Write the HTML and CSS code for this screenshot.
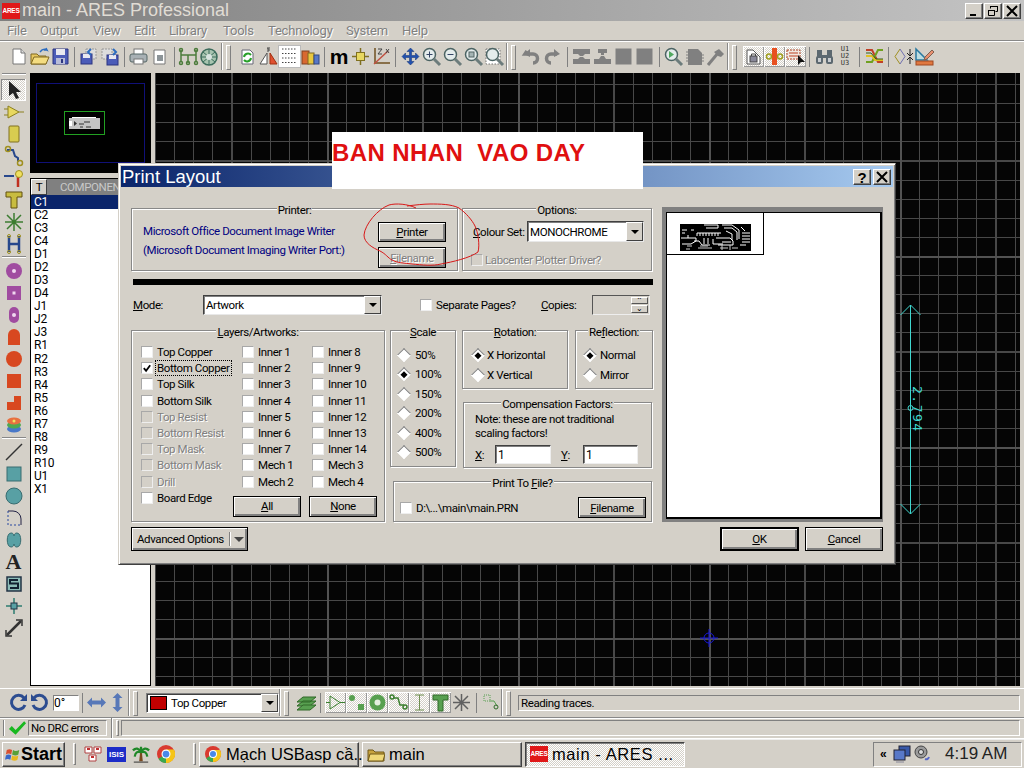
FILE: index.html
```html
<!DOCTYPE html>
<html lang="en">
<head>
<meta charset="utf-8">
<title>main - ARES Professional</title>
<link rel="stylesheet" href="styles.css">
</head>
<body>
<svg class="defs" width="0" height="0" aria-hidden="true">
  <symbol id="chrome" viewBox="0 0 16 16"><circle cx="8" cy="8" r="8" fill="#d93a2f"/><path d="M8 8L1.2 12.2A8 8 0 0 0 8 16z" fill="#3aa84f"/><path d="M8 8v8a8 8 0 0 0 7-12H8z" fill="#f5c518"/><circle cx="8" cy="8" r="4" fill="#fff"/><circle cx="8" cy="8" r="3" fill="#4a88e8"/></symbol>
  <symbol id="floppy" viewBox="0 0 21 21"><path d="M3 3h15v15H3z" fill="#4c5cb8" stroke="#2c3580"/><rect x="6" y="3" width="9" height="6" fill="#e8e8f0"/><rect x="6" y="12" width="9" height="6" fill="#b8bcd8"/><rect x="11" y="13" width="2" height="4" fill="#2c3580"/></symbol>
  <symbol id="mag" viewBox="0 0 21 21"><circle cx="8.500" cy="8.500" r="6" fill="#e4ecec" stroke="#4c6464" stroke-width="1.500"/><path d="M13 13l6 6" stroke="#6c7c7c" stroke-width="3"/></symbol>
  <symbol id="check" viewBox="0 0 11 11"><path d="M2 5l2.500 3L9 2" fill="none" stroke="#000" stroke-width="2"/></symbol>
  <symbol id="padr" viewBox="0 0 22 22"><circle cx="11" cy="11" r="8" fill="#a04ca0"/><circle cx="11" cy="11" r="2" fill="#f0d8f0"/></symbol>
</svg>

<div class="app">
  <header class="titlebar">
    <span class="logo">ARES</span>
    <span class="title-text">main - ARES Professional</span>
    <div class="winbtns">
      <span class="winbtn"><svg width="10" height="10"><path d="M1 8h6v2H1z"/></svg></span>
      <span class="winbtn"><svg width="12" height="12" fill="none" stroke="#000"><path d="M3.500 3.500V1.500h7v5H8.500"/><path d="M3 1.500h8M1.500 5.500h6v5h-6z"/><path d="M1 5.500h7" stroke-width="1"/></svg></span>
      <span class="winbtn"><svg width="12" height="12"><path d="M1 1l10 10M11 1L1 11" stroke="#000" stroke-width="2"/></svg></span>
    </div>
  </header>

  <nav class="menubar">
    <span class="menu m-file">File</span><span class="menu m-output">Output</span><span class="menu m-view">View</span><span class="menu m-edit">Edit</span><span class="menu m-lib">Library</span><span class="menu m-tools">Tools</span><span class="menu m-tech">Technology</span><span class="menu m-sys">System</span><span class="menu m-help">Help</span>
  </nav>

  <div class="toolbar">
    <span class="i"><svg viewBox="0 0 21 21"><path d="M5 3h8l4 4v11H5z" fill="#fff" stroke="#777"/><path d="M13 3v4h4" fill="#ddd" stroke="#777"/></svg></span>
    <span class="i"><svg viewBox="0 0 21 21"><path d="M2 8h6l2 2h7v8H2z" fill="#e8c860" stroke="#806820"/><path d="M2 18l3-7h15l-3 7z" fill="#f4dc80" stroke="#806820"/><path d="M11 6q3-4 7-2l-1-2M18 4l-3 0" fill="none" stroke="#2c6cc0" stroke-width="1.500"/></svg></span>
    <span class="i"><svg viewBox="0 0 21 21"><use href="#floppy"/></svg></span>
    <span class="sep"></span>
    <span class="i"><svg viewBox="0 0 21 21"><path d="M8 3h10v10H8z" fill="#ddd" stroke="#999" stroke-dasharray="2 1"/><rect x="3" y="8" width="11" height="10" fill="#4c5cb8" stroke="#2c3580"/><rect x="5" y="8" width="7" height="4" fill="#e8e8f0"/><path d="M13 3l-3 3 3 3" fill="none" stroke="#2c6cc0" stroke-width="2"/></svg></span>
    <span class="i"><svg viewBox="0 0 21 21"><path d="M3 3h10v10H3z" fill="#ddd" stroke="#999" stroke-dasharray="2 1"/><rect x="8" y="9" width="11" height="10" fill="#4c5cb8" stroke="#2c3580"/><rect x="10" y="9" width="7" height="4" fill="#e8e8f0"/><path d="M14 3l3 3-3 3" fill="none" stroke="#2c6cc0" stroke-width="2"/></svg></span>
    <span class="sep sep8"></span>
    <span class="i"><svg viewBox="0 0 21 21"><rect x="6" y="3" width="9" height="6" fill="#fff" stroke="#777"/><rect x="2" y="8" width="17" height="8" rx="2" fill="#a8b0b4" stroke="#566"/><rect x="6" y="13" width="9" height="5" fill="#fff" stroke="#777"/></svg></span>
    <span class="i"><svg viewBox="0 0 21 21"><path d="M5 4h11v14H5z" fill="#fff" stroke="#777"/><rect x="8" y="9" width="6" height="6" fill="#8c9498"/></svg></span>
    <span class="sep sep8"></span>
    <span class="i"><svg viewBox="0 0 21 21" fill="none" stroke="#4c7c3c" stroke-width="1.500"><path d="M3 4v12M18 4v12M3 9h7v8M10 9h8"/><circle cx="3" cy="4" r="1.500"/><circle cx="18" cy="4" r="1.500"/><circle cx="3" cy="17" r="1.500"/><circle cx="18" cy="17" r="1.500"/><circle cx="10" cy="17" r="1.500"/></svg></span>
    <span class="i"><svg viewBox="0 0 21 21"><circle cx="10" cy="11" r="8" fill="#a8c4b0" stroke="#3c6c5c" stroke-width="1.500"/><path d="M10 3v16M2 11h16M4 6l12 10M16 6L4 16" stroke="#3c6c5c"/><circle cx="10" cy="11" r="3" fill="#d8e4e0"/></svg></span>
    <span class="grip"></span>
    <span class="i"><svg viewBox="0 0 21 21"><path d="M5 4h8l3 3v11H5z" fill="#fff" stroke="#667"/><path d="M7 11a4 4 0 0 1 7-2M14 12a4 4 0 0 1-7 2" fill="none" stroke="#28a028" stroke-width="2"/></svg></span>
    <span class="i"><svg viewBox="0 0 21 21"><path d="M9 7L2 18h7z" fill="#fff" stroke="#555"/><path d="M12 7l7 11h-7z" fill="#e05030" stroke="#a03010"/><path d="M9 2h3M10 2v4M10 4h2" stroke="#444"/></svg></span>
    <span class="i i-on"><svg viewBox="0 0 21 21"><path d="M3 3h15M3 7.500h15M3 12h15M3 16.500h15" stroke="#444" stroke-dasharray="1.500 1.500"/></svg></span>
    <span class="i"><svg viewBox="0 0 21 21"><rect x="2" y="5" width="7" height="13" fill="#d86830" stroke="#804020"/><rect x="8" y="7" width="6" height="11" fill="#e8c840" stroke="#806820"/><rect x="14" y="9" width="5" height="9" fill="#5878c8" stroke="#304880"/></svg></span>
    <span class="sep sep8"></span>
    <span class="i"><span class="icon-m">m</span></span>
    <span class="i"><svg viewBox="0 0 21 21"><path d="M10.500 2v17M2 10.500h17" stroke="#807020" stroke-width="1.500"/><rect x="6.500" y="6.500" width="8" height="8" fill="#e8d860" stroke="#807020"/></svg></span>
    <span class="i"><svg viewBox="0 0 21 21" fill="none"><path d="M4 2v15h15" stroke="#705020" stroke-width="1.500"/><path d="M3 18L17 5" stroke="#c05040" stroke-width="1.500"/><path d="M7 3h4L7 8h4M15 3l3 4M18 3l-3 4" stroke="#444"/></svg></span>
    <span class="sep sep8"></span>
    <span class="i"><svg viewBox="0 0 21 21"><path d="M10.500 2l3.500 3.500h-2.500v4h4V7l3.500 3.500-3.500 3.500v-2.500h-4v4H14L10.500 19 7 15.500h2.500v-4h-4V14L2 10.500 5.500 7v2.500h4v-4H7z" fill="#2050b0" stroke="#103070" stroke-width=".5"/></svg></span>
    <span class="i"><svg viewBox="0 0 21 21"><use href="#mag"/><path d="M5.500 8.500h6M8.500 5.500v6" stroke="#346"/></svg></span>
    <span class="i"><svg viewBox="0 0 21 21"><use href="#mag"/><path d="M5.500 8.500h6" stroke="#346"/></svg></span>
    <span class="i"><svg viewBox="0 0 21 21"><use href="#mag"/><rect x="6" y="6" width="5" height="5" fill="#a4b4b4" stroke="#566"/></svg></span>
    <span class="i"><svg viewBox="0 0 21 21"><path d="M2 3h14v15H2z" fill="#fff" stroke="#777" stroke-dasharray="1.500 1.500"/><use href="#mag"/></svg></span>
    <span class="grip"></span>
    <span class="i"><svg viewBox="0 0 21 21"><path d="M6 5l-2 3 8-0a4 4 0 0 1 0 9" fill="none" stroke="#808080" stroke-width="3.500"/><path d="M3 8l6-5v8z" fill="#808080"/></svg></span>
    <span class="i"><svg viewBox="0 0 21 21"><path d="M15 8l-6 0a4 4 0 0 0 0 9" fill="none" stroke="#808080" stroke-width="3.500"/><path d="M18 8l-6-5v8z" fill="#808080"/></svg></span>
    <span class="sep sep8"></span>
    <span class="i"><svg viewBox="0 0 21 21"><path d="M2 3h17v5h-5l-2 2h-3L7 8H2zM2 18v-5h5l2-2h3l2 2h5v5z" fill="#808080"/></svg></span>
    <span class="i"><svg viewBox="0 0 21 21"><path d="M2 13h5l2-3h3l2 3h5v5H2zM6 3h9v4h-3v2H9V7H6z" fill="#808080"/></svg></span>
    <span class="i"><svg viewBox="0 0 21 21"><rect x="2.500" y="2.500" width="16" height="16" fill="#808080"/></svg></span>
    <span class="i"><svg viewBox="0 0 21 21"><rect x="2.500" y="2.500" width="16" height="16" fill="#808080"/></svg></span>
    <span class="sep sep8"></span>
    <span class="i"><svg viewBox="0 0 21 21"><use href="#mag"/><path d="M6 5l5 3.500L6 12z" fill="#50a860"/></svg></span>
    <span class="i"><svg viewBox="0 0 21 21"><path d="M4 3h10l4 4v12H4z" fill="#808080"/><path d="M2 6h2M2 9h2M2 12h2M2 15h2M18 9h2M18 12h2M18 15h2" stroke="#808080"/></svg></span>
    <span class="i"><svg viewBox="0 0 21 21"><path d="M3 19L13 7" stroke="#808080" stroke-width="3"/><path d="M9 6l5-3 5 5-3 3-3-1-2-2z" fill="#808080"/></svg></span>
    <span class="grip"></span>
    <span class="i i-dither"><svg viewBox="0 0 21 21"><path d="M4 18V4h6l7 7v7z" fill="#fff" stroke="#555"/><rect x="7" y="10" width="7" height="6" fill="#889" stroke="#444"/><path d="M8.500 10V8h4v2" fill="none" stroke="#444"/></svg></span>
    <span class="i i-dither"><svg viewBox="0 0 21 21"><rect x="8" y="2" width="5" height="17" fill="#e85020"/><circle cx="5" cy="10.500" r="2.500" fill="none" stroke="#a0a020" stroke-width="1.500"/><circle cx="16" cy="10.500" r="2.500" fill="none" stroke="#a0a020" stroke-width="1.500"/></svg></span>
    <span class="i i-dither"><svg viewBox="0 0 21 21"><rect x="2" y="4" width="13" height="9" fill="#f0e8e0" stroke="#b04020" stroke-dasharray="2 1"/><path d="M4 7h9M4 10h9" stroke="#c04020"/><path d="M13 9v10l3-3h4z" fill="#111"/></svg></span>
    <span class="sep sep8"></span>
    <span class="i"><svg viewBox="0 0 21 21" fill="#5c6870"><rect x="2" y="10" width="7" height="8" rx="2"/><rect x="12" y="10" width="7" height="8" rx="2"/><rect x="3" y="4" width="5" height="7"/><rect x="13" y="4" width="5" height="7"/><rect x="8" y="9" width="5" height="3"/><path d="M4 12h3v4H4zM14 12h3v4h-3z" fill="#c8ccd0"/></svg></span>
    <span class="i icon-u"><span>U1</span><span>U2</span><span>U3</span></span>
    <span class="sep sep8"></span>
    <span class="i"><svg viewBox="0 0 21 21" fill="none" stroke-width="2"><path d="M2 4h6l6 12h5" stroke="#c04028"/><path d="M2 16h6l6-12h5" stroke="#70a020"/><path d="M2 10h6l3 4h8" stroke="#e0c020"/><path d="M2 7h5l5 6h7" stroke="#306020" stroke-width="1"/></svg></span>
    <span class="sep sep8"></span>
    <span class="i"><svg viewBox="0 0 21 21" fill="none"><path d="M7 3L2 10.500 7 18" stroke="#a09020"/><path d="M7 3l5 7.500L7 18" stroke="#7070b0"/><path d="M17 3v6M14 7l3 3 3-3M17 18v-6M14 14l3-3 3 3" stroke="#222"/></svg></span>
    <span class="i"><svg viewBox="0 0 21 21"><path d="M2 14V3l11 11z" fill="#bcdce0" stroke="#2878a0" stroke-width="1.500"/><rect x="2" y="15" width="17" height="4" fill="#e07840" stroke="#a04820"/><path d="M11 11l7-7 2 2-7 7-3 1z" fill="#e89070" stroke="#806050"/></svg></span>
  </div>

  <main class="workspace">
    <aside class="tools">
      <span class="tools-grip"></span>
      <span class="t t-on"><svg viewBox="0 0 22 22"><path d="M6 2v15l4-3 3 6 3-1-3-6h5z" fill="#222"/></svg></span>
      <span class="t"><svg viewBox="0 0 22 22"><path d="M5 5v12l11-6zM1 8h4M1 14h4M16 11h5" fill="#e8d860" stroke="#8c8020"/></svg></span>
      <span class="t"><svg viewBox="0 0 22 22"><rect x="6" y="3" width="10" height="16" rx="1" fill="#d8cc50" stroke="#807020"/></svg></span>
      <span class="t"><svg viewBox="0 0 22 22" fill="none"><path d="M4 5h6l2 6 3 2v4" stroke="#28488c" stroke-width="2"/><circle cx="5" cy="4" r="2.500" stroke="#a09020" stroke-width="1.500"/><circle cx="17" cy="18" r="2.500" stroke="#a09020" stroke-width="1.500"/></svg></span>
      <span class="t"><svg viewBox="0 0 22 22" fill="none"><path d="M1 9h10" stroke="#28488c" stroke-width="2"/><path d="M15 10v10" stroke="#c03020" stroke-width="2.500"/><circle cx="16" cy="7" r="3.500" fill="#f0e060" stroke="#a09020"/></svg></span>
      <span class="t"><svg viewBox="0 0 22 22"><path d="M3 3h16v5h-5v11H8V8H3z" fill="#c8bc40" stroke="#605010"/></svg></span>
      <span class="t"><svg viewBox="0 0 22 22" stroke="#3c7c30" stroke-width="1.500"><path d="M11 2v18M2 11h18M4 4l14 14M18 4L4 18"/></svg></span>
      <span class="t"><svg viewBox="0 0 22 22" fill="none"><path d="M6 3v16M16 3v16M6 11h10" stroke="#28488c" stroke-width="2.500"/><circle cx="6" cy="3" r="1.500" stroke="#a09020"/><circle cx="16" cy="3" r="1.500" stroke="#a09020"/><circle cx="6" cy="19" r="1.500" stroke="#a09020"/><circle cx="16" cy="19" r="1.500" stroke="#a09020"/></svg></span>
      <span class="tools-sep"></span>
      <span class="t"><svg viewBox="0 0 22 22"><use href="#padr"/></svg></span>
      <span class="t"><svg viewBox="0 0 22 22"><rect x="4" y="4" width="14" height="14" fill="#a04ca0"/><rect x="9.500" y="9.500" width="3" height="3" fill="#f0d8f0"/></svg></span>
      <span class="t"><svg viewBox="0 0 22 22"><rect x="6" y="3" width="10" height="16" rx="5" fill="#a04ca0"/><circle cx="11" cy="11" r="2" fill="#f0d8f0"/></svg></span>
      <span class="t"><svg viewBox="0 0 22 22"><path d="M5 19V9a6 6 0 0 1 12 0v10z" fill="#d84820"/></svg></span>
      <span class="t"><svg viewBox="0 0 22 22"><circle cx="11" cy="11" r="8" fill="#d84820"/></svg></span>
      <span class="t"><svg viewBox="0 0 22 22"><rect x="4" y="4" width="14" height="14" fill="#d84820"/></svg></span>
      <span class="t"><svg viewBox="0 0 22 22"><path d="M4 18V10h7V4h7v14z" fill="#d84820"/></svg></span>
      <span class="t"><svg viewBox="0 0 22 22"><ellipse cx="11" cy="15" rx="7" ry="3.500" fill="#4878c8"/><ellipse cx="11" cy="11" rx="7" ry="3.500" fill="#50a850"/><ellipse cx="11" cy="7" rx="7" ry="3.500" fill="#e87040"/><circle cx="11" cy="7" r="1.500" fill="#f0e060"/></svg></span>
      <span class="tools-sep"></span>
      <span class="t"><svg viewBox="0 0 22 22"><path d="M3 19L19 3" stroke="#333" stroke-width="1.500"/></svg></span>
      <span class="t"><svg viewBox="0 0 22 22"><rect x="4" y="4" width="14" height="14" fill="#58a0a4" stroke="#386c70"/></svg></span>
      <span class="t"><svg viewBox="0 0 22 22"><circle cx="11" cy="11" r="8" fill="#58a0a4" stroke="#386c70"/></svg></span>
      <span class="t"><svg viewBox="0 0 22 22" fill="none"><path d="M5 4h5a8 8 0 0 1 8 8v6" stroke="#224"/><path d="M5 4v14h13" stroke-dasharray="2 2" stroke="#2848a0"/></svg></span>
      <span class="t"><svg viewBox="0 0 22 22"><path d="M8 4c3 0 3 3 3 3s0-3 3-3c5 0 5 14 0 14-3 0-3-3-3-3s0 3-3 3C3 18 3 4 8 4z" fill="#58a0a4" stroke="#386c70"/></svg></span>
      <span class="t t-a">A</span>
      <span class="t"><svg viewBox="0 0 22 22"><rect x="4" y="4" width="14" height="14" fill="#8cbcb8" stroke="#234" stroke-width="1.500"/><path d="M15 7H7v3.500h8V15H7" fill="none" stroke="#123" stroke-width="2"/></svg></span>
      <span class="t"><svg viewBox="0 0 22 22"><path d="M11 3v16M3 11h16" stroke="#2c7c70" stroke-width="1.500"/><rect x="8" y="8" width="6" height="6" fill="#58a0a4" stroke="#234"/></svg></span>
      <span class="t"><svg viewBox="0 0 22 22" fill="none"><path d="M4 18L18 4" stroke="#333" stroke-width="2.500"/><path d="M3 13v6h6M13 3h6v6" stroke="#333" stroke-width="1.500"/></svg></span>
    </aside>

    <aside class="side">
      <div class="overview">
        <div class="ov-board"><div class="ov-green">
          <svg class="ov-pcb" width="31" height="12" viewBox="0 0 31 12"><rect y="1" width="31" height="11" fill="#c4c4c4"/><path d="M3 .5h24" stroke="#fff"/><rect y="4" width="3" height="5" fill="#fff"/><path d="M5 4v5l3-2.500z" fill="#333"/><path d="M10 7h5M15 5h6M11 10h3M17 10h5" stroke="#333"/></svg>
        </div></div>
      </div>
      <div class="listbox">
        <div class="list-head"><span class="list-t">T</span><span class="list-title">COMPONEN</span></div>
        <ul class="list">
          <li class="sel">C1</li><li>C2</li><li>C3</li><li>C4</li><li>D1</li><li>D2</li><li>D3</li><li>D4</li><li>J1</li><li>J2</li><li>J3</li><li>R1</li><li>R2</li><li>R3</li><li>R4</li><li>R5</li><li>R6</li><li>R7</li><li>R8</li><li>R9</li><li>R10</li><li>U1</li><li>X1</li>
        </ul>
      </div>
    </aside>

    <section class="canvas">
      <svg class="canvas-art" width="865" height="613" viewBox="155 73 865 613">
        <g stroke="#3fd8d0" fill="none">
          <path d="M910.500 305v209M900.500 315l10-10 10 10M900.500 504l10 10 10-10"/>
          <circle cx="910.500" cy="408" r="2.500"/>
        </g>
        <text class="dim-text" transform="translate(913 386) rotate(90)">2.794</text>
        <g stroke="#1818d8" fill="none"><circle cx="709" cy="638" r="5"/><path d="M700 638h18M709 629v18"/></g>
      </svg>
    </section>
  </main>

  <div class="bottombar">
    <span class="i"><svg viewBox="0 0 21 21" fill="none"><path d="M16 6a7 7 0 1 0 1 7" stroke="#2c4c90" stroke-width="3"/><path d="M19 2v7h-7z" fill="#2c4c90"/></svg></span>
    <span class="i"><svg viewBox="0 0 21 21" fill="none"><path d="M5 6a7 7 0 1 1-1 7" stroke="#2c4c90" stroke-width="3"/><path d="M2 2v7h7z" fill="#2c4c90"/></svg></span>
    <input class="angle" value="0°" aria-label="Angle">
    <span class="sep"></span>
    <span class="i"><svg viewBox="0 0 21 21"><path d="M1 10.500l5-5v3h9v-3l5 5-5 5v-3H6v3z" fill="#5878b8"/></svg></span>
    <span class="i"><svg viewBox="0 0 21 21"><path d="M10.500 1l5 5h-3v9h3l-5 5-5-5h3V6h-3z" fill="#5878b8"/></svg></span>
    <span class="grip grip-b1"></span>
    <div class="layer-combo">
      <span class="swatch"></span><span class="layer-text">Top Copper</span>
      <span class="drop drop-l"></span>
    </div>
    <span class="grip grip-b2"></span>
    <span class="i"><svg viewBox="0 0 21 21" fill="#58a050" stroke="#306828"><path d="M1 14l6-5h13l-6 5zM1 10l6-5h13l-6 5z"/><path d="M1 18l6-5h13l-6 5z"/></svg></span>
    <span class="sep sep-b"></span>
    <span class="i i-dither"><svg viewBox="0 0 21 21" fill="none" stroke="#3c8030"><path d="M5 4v13l10-6.500zM1 10.500h4M15 10.500h5"/></svg></span>
    <span class="i i-dither"><svg viewBox="0 0 21 21"><circle cx="6" cy="6" r="3" fill="#58a050"/><rect x="12" y="12" width="6" height="6" fill="#58a050"/></svg></span>
    <span class="i i-dither"><svg viewBox="0 0 21 21"><circle cx="10.500" cy="10.500" r="8" fill="#58a050"/><circle cx="10.500" cy="10.500" r="3" fill="#e4f0e0"/></svg></span>
    <span class="i i-dither"><svg viewBox="0 0 21 21" fill="none" stroke="#3c8030" stroke-width="1.500"><path d="M5 6h5l2 7h4"/><circle cx="4" cy="5" r="2"/><circle cx="17" cy="15" r="2"/></svg></span>
    <span class="i i-dither"><svg viewBox="0 0 21 21" fill="none" stroke="#709050"><path d="M10.500 3v15M6 3h9M6 18h9"/></svg></span>
    <span class="i i-dither"><svg viewBox="0 0 21 21"><path d="M3 3h15v5h-5v11H8V8H3z" fill="#58a050" stroke="#306828"/></svg></span>
    <span class="i"><svg viewBox="0 0 21 21" stroke="#606060" stroke-width="1.500"><path d="M10.500 2v17M2 10.500h17M4 4l13 13M17 4L4 17"/></svg></span>
    <span class="sep sep8"></span>
    <span class="i"><svg viewBox="0 0 21 21" fill="none"><path d="M4 3h6v6H4z" stroke="#58a050" stroke-dasharray="1 1"/><path d="M10 9h4l3 5" stroke="#58a050"/><circle cx="16" cy="15" r="2" stroke="#306828"/></svg></span>
    <span class="grip grip-b3"></span>
    <div class="msg">Reading traces.</div>
  </div>

  <div class="statusbar">
    <span class="st-grip"></span>
    <svg class="st-check" viewBox="0 0 20 16"><path d="M1 9l3-3 4 4 9-9 2 2-11 12z" fill="#18b820"/></svg>
    <span class="st-box st-drc">No DRC errors</span>
    <span class="st-line"></span>
    <span class="st-grip2"></span>
    <span class="st-box st-wide"></span>
  </div>

  <footer class="taskbar">
    <button class="start"><svg class="flag" viewBox="0 0 18 18"><path d="M2 4q3-2 6 0l-1 5q-3-2-6 0z" fill="#d85030"/><path d="M9 4q3 2 7 0l-1 5q-3 2-7 0z" fill="#58a038"/><path d="M1 10q3-2 6 0l-1 5q-3-2-6 0z" fill="#3868c8"/><path d="M8 10q3 2 7 0l-1 5q-3 2-7 0z" fill="#e8b820"/></svg>Start</button>
    <span class="tb-sep"></span>
    <span class="quick"><svg viewBox="0 0 18 18"><path d="M1 2h7v6H1zM10 2h7v6h-7zM5 10h7v6H5z" fill="#fff" stroke="#b04040"/><path d="M3 4h3M12 4h3M7 12h3" stroke="#c03030" stroke-width="2"/></svg></span>
    <span class="quick quick-isis">ISIS</span>
    <span class="quick"><svg viewBox="0 0 20 20"><path d="M9 8h2l1 10H8z" fill="#7c4a20"/><path d="M10 8Q6 1 1 6M10 8q-6-2-7 5M10 8q4-7 9-2M10 8q6-2 7 5M10 8V2" fill="none" stroke="#208828" stroke-width="2.500"/><path d="M2 19h16" stroke="#222"/></svg></span>
    <span class="quick"><svg viewBox="0 0 16 16"><use href="#chrome"/></svg></span>
    <span class="tb-sep tb-sep2"></span>
    <button class="task"><svg class="task-ico"><use href="#chrome"/></svg>Mạch USBasp cầ...</button>
    <button class="task"><svg class="task-ico" viewBox="0 0 18 16"><path d="M1 4h5l2 2h9v9H1z" fill="#c8a440" stroke="#705818"/><path d="M1 15l2-7h15l-2 7z" fill="#f0d878" stroke="#705818"/></svg>main</button>
    <button class="task task-on"><span class="logo logo-task">ARES</span>main - ARES ...</button>
    <div class="tray">
      <span class="tray-more">«</span>
      <svg class="tray-ico" viewBox="0 0 18 18"><rect x="6" y="1" width="11" height="10" fill="#3858a8" stroke="#223"/><rect x="1" y="5" width="11" height="10" fill="#5878c8" stroke="#223"/><path d="M3 17h8" stroke="#889"/></svg>
      <svg class="tray-ico tray-ico2" viewBox="0 0 18 18"><circle cx="8" cy="7" r="6" fill="#9a9a9a" stroke="#444"/><circle cx="8" cy="7" r="2.500" fill="#ddd" stroke="#333"/><path d="M12 14q3 1 4-2" stroke="#5868c8" fill="none" stroke-width="2"/></svg>
      <span class="clock">4:19 AM</span>
    </div>
  </footer>
</div>

<section class="dialog" aria-label="Print Layout">
  <header class="dlg-title">
    <span>Print Layout</span>
    <span class="dlg-btns">
      <span class="winbtn dlg-btn">?</span>
      <span class="winbtn dlg-btn"><svg width="12" height="12"><path d="M1 1l10 10M11 1L1 11" stroke="#000" stroke-width="2"/></svg></span>
    </span>
  </header>
  <div class="dlg-body">
    <div class="dlg-left">
      <div class="row-top">
        <div class="group g-printer">
          <div class="g-title">Printer:</div>
          <div class="printer-in">
            <div class="printer-name"><p>Microsoft Office Document Image Writer</p><p>(Microsoft Document Imaging Writer Port:)</p></div>
            <div class="printer-btns">
              <button class="btn btn-printer"><u>P</u>rinter</button>
              <button class="btn btn-printer btn-off"><u>F</u>ilename</button>
            </div>
          </div>
        </div>
        <div class="group g-options">
          <div class="g-title">Options:</div>
          <div class="opt-row"><label class="lbl"><u>C</u>olour Set:</label><div class="combo combo-col"><span>MONOCHROME</span><span class="drop"></span></div></div>
          <div class="chk-row opt-chk"><span class="cb cb-off"></span><span class="dis">Labcenter Plotter Driver?</span></div>
        </div>
      </div>
      <div class="blackbar"></div>
      <div class="row-mode">
        <span class="lbl lbl-mode"><u>M</u>ode:</span>
        <div class="combo combo-mode"><span>Artwork</span><span class="drop"></span></div>
        <span class="cb cb-sep"></span><span class="lbl lbl-sep">Separate Pages?</span>
        <span class="lbl lbl-copies"><u>C</u>opies:</span>
        <div class="spin"><span class="spin-btns"><span>⌃</span><span>⌄</span></span></div>
      </div>
      <div class="row-main">
        <div class="group g-layers">
          <div class="g-title"><u>L</u>ayers/Artworks:</div>
          <div class="layers-in">
            <div class="col col-1">
              <div class="chk-row"><span class="cb"></span>Top Copper</div>
              <div class="chk-row"><span class="cb"><svg width="11" height="11"><use href="#check"/></svg></span><span class="focus">Bottom Copper</span></div>
              <div class="chk-row"><span class="cb"></span>Top Silk</div>
              <div class="chk-row"><span class="cb"></span>Bottom Silk</div>
              <div class="chk-row"><span class="cb cb-off"></span><span class="dis">Top Resist</span></div>
              <div class="chk-row"><span class="cb cb-off"></span><span class="dis">Bottom Resist</span></div>
              <div class="chk-row"><span class="cb cb-off"></span><span class="dis">Top Mask</span></div>
              <div class="chk-row"><span class="cb cb-off"></span><span class="dis">Bottom Mask</span></div>
              <div class="chk-row"><span class="cb cb-off"></span><span class="dis">Drill</span></div>
              <div class="chk-row"><span class="cb"></span>Board Edge</div>
            </div>
            <div class="layers-right">
              <div class="layers-cols">
                <div class="col col-2">
                  <div class="chk-row"><span class="cb"></span>Inner 1</div>
                  <div class="chk-row"><span class="cb"></span>Inner 2</div>
                  <div class="chk-row"><span class="cb"></span>Inner 3</div>
                  <div class="chk-row"><span class="cb"></span>Inner 4</div>
                  <div class="chk-row"><span class="cb"></span>Inner 5</div>
                  <div class="chk-row"><span class="cb"></span>Inner 6</div>
                  <div class="chk-row"><span class="cb"></span>Inner 7</div>
                  <div class="chk-row"><span class="cb"></span>Mech 1</div>
                  <div class="chk-row"><span class="cb"></span>Mech 2</div>
                </div>
                <div class="col">
                  <div class="chk-row"><span class="cb"></span>Inner 8</div>
                  <div class="chk-row"><span class="cb"></span>Inner 9</div>
                  <div class="chk-row"><span class="cb"></span>Inner 10</div>
                  <div class="chk-row"><span class="cb"></span>Inner 11</div>
                  <div class="chk-row"><span class="cb"></span>Inner 12</div>
                  <div class="chk-row"><span class="cb"></span>Inner 13</div>
                  <div class="chk-row"><span class="cb"></span>Inner 14</div>
                  <div class="chk-row"><span class="cb"></span>Mech 3</div>
                  <div class="chk-row"><span class="cb"></span>Mech 4</div>
                </div>
              </div>
              <div class="all-none">
                <button class="btn btn-sm"><u>A</u>ll</button>
                <button class="btn btn-sm"><u>N</u>one</button>
              </div>
            </div>
          </div>
        </div>
        <div class="main-right">
          <div class="mr-top">
            <div class="group g-scale">
              <div class="g-title"><u>S</u>cale</div>
              <div class="rad-list">
                <div class="rad-row"><span class="radio"></span>50%</div>
                <div class="rad-row"><span class="radio on"></span>100%</div>
                <div class="rad-row"><span class="radio"></span>150%</div>
                <div class="rad-row"><span class="radio"></span>200%</div>
                <div class="rad-row"><span class="radio"></span>400%</div>
                <div class="rad-row"><span class="radio"></span>500%</div>
              </div>
            </div>
            <div class="mr-stack">
              <div class="mr-rr">
                <div class="group g-rot">
                  <div class="g-title"><u>R</u>otation:</div>
                  <div class="rad-list rad-rot">
                    <div class="rad-row"><span class="radio on"></span>X Horizontal</div>
                    <div class="rad-row"><span class="radio"></span>X Vertical</div>
                  </div>
                </div>
                <div class="group g-ref">
                  <div class="g-title">Re<u>f</u>lection:</div>
                  <div class="rad-list rad-ref">
                    <div class="rad-row"><span class="radio on"></span>Normal</div>
                    <div class="rad-row"><span class="radio"></span>Mirror</div>
                  </div>
                </div>
              </div>
              <div class="group g-comp">
                <div class="g-title">Compensation Factors:</div>
                <p class="comp-note">Note: these are not traditional<br>scaling factors!</p>
                <div class="comp-row">
                  <span class="lbl lbl-x"><u>X</u>:</span><input class="field" value="1" aria-label="X">
                  <span class="lbl lbl-y"><u>Y</u>:</span><input class="field field-y" value="1" aria-label="Y">
                </div>
              </div>
            </div>
          </div>
          <div class="group g-file">
            <div class="g-title">Print To <u>F</u>ile?</div>
            <div class="file-row">
              <span class="cb"></span><span class="file-name">D:\...\main\main.PRN</span>
              <button class="btn btn-sm btn-file"><u>F</u>ilename</button>
            </div>
          </div>
        </div>
      </div>
      <button class="btn btn-adv">Advanced Options<span class="adv-sep"></span><span class="adv-arrow"></span></button>
    </div>
    <div class="dlg-right">
      <div class="preview">
        <div class="paper">
          <div class="paper-box">
            <svg class="pcb" width="71" height="27" viewBox="0 0 71 27">
              <rect width="71" height="27" fill="#000"/>
              <g fill="none" stroke="#fff">
                <path d="M24 1h14v3H26M42 1h10l7 5v9M44 4h8l5 4v8M46 7l6 3v6M61 3l4 4"/>
                <path d="M2 6h5M11 6h3M2 9h3M17 9h24M17 12V9M20 12V9M23 12V9M26 12V9M29 12V9M32 12V9M35 12V9M38 12V9"/>
                <path d="M1 14h15v3l-5 3H2M14 17h5l3 4h8M24 14v6M28 14v6M33 15v5h10M8 11v3"/>
                <path d="M36 14h14l3 3v4H38M42 18h9M62 9h8M62 12h8M62 15h8M62 18h8M60 21h6"/>
                <path d="M7 22h5M18 24h14M20 22h8M40 24h8M52 24h6M6 25h4M42 21v5M50 21v5" stroke="#ccc"/>
              </g>
            </svg>
          </div>
        </div>
      </div>
      <div class="ok-row">
        <button class="btn btn-main btn-ok"><u>O</u>K</button>
        <button class="btn btn-main"><u>C</u>ancel</button>
      </div>
    </div>
  </div>
</section>

<div class="banner">BAN NHAN&nbsp; VAO DAY</div>

<svg class="scribble" width="120" height="70" viewBox="360 200 120 70">
  <path d="M416 208C408 204 396 203 389 205C378 209 365 224 364 235C364 243 373 248 380 251C386 254 388 258 392 260C397 263 404 263 412 264C422 265 433 266 441 264C452 262 470 258 478 252C480 245 478 232 475 226C472 220 466 213 459 208C451 204 440 204 430 204C424 204 415 205 407 206" fill="none" stroke="#d81818" stroke-width="1"/>
</svg>
</body>
</html>
```
FILE: styles.css
```css
* { box-sizing: border-box; }
html, body { margin: 0; padding: 0; height: 768px; overflow: hidden; }
body { font: 11.500px Roboto, "Liberation Sans", Arial, sans-serif; letter-spacing: -.400px; color: #000; background: #d4d0c8; }
p { margin: 0; }
u { text-decoration: underline; }
.defs { position: absolute; }
button { font: inherit; letter-spacing: inherit; color: inherit; padding: 0; }

.app { width: 1024px; height: 768px; display: flex; flex-direction: column; background: #d4d0c8; }

/* window title */
.titlebar { height: 21px; flex: none; display: flex; align-items: center; padding-left: 2px; background: linear-gradient(90deg, #7e7e7e, #c4c4c4); }
.logo { width: 18px; height: 16px; flex: none; display: block; background: #e01818; color: #fff; font: bold 6.500px/16px "Liberation Sans", sans-serif; letter-spacing: -.300px; text-align: center; white-space: nowrap; }
.title-text { margin-left: 2px; font: 18px "Liberation Sans", sans-serif; letter-spacing: 0; color: #e0dcd4; white-space: nowrap; }
.winbtns { margin-left: auto; display: flex; gap: 1px; margin-right: 3px; }
.winbtn { width: 18px; height: 16px; display: flex; align-items: center; justify-content: center; background: #d4d0c8; border: 1px solid; border-color: #fff #404040 #404040 #fff; box-shadow: inset -1px -1px 0 #808080; }

/* menu */
.menubar { height: 20px; flex: none; display: flex; align-items: center; border-bottom: 1px solid #888; font-size: 13px; letter-spacing: -.200px; }
.menu { color: #808080; text-shadow: 1px 1px 0 #fff; white-space: nowrap; }
.m-file { margin-left: 7px; width: 33px; }
.m-output { width: 53px; }
.m-view { width: 41px; }
.m-edit { width: 35px; }
.m-lib { width: 54px; }
.m-tools { width: 45px; }
.m-tech { width: 78px; }
.m-sys { width: 56px; }

/* toolbars */
.toolbar { height: 32px; flex: none; display: flex; align-items: center; padding: 0 0 2px 8px; border-top: 1px solid #fff; }
.i { width: 21px; height: 21px; flex: none; display: flex; align-items: center; justify-content: center; }
.i svg { width: 21px; height: 21px; display: block; }
.i-on { background: #fff; outline: 1px solid #bbb; }
.i-dither { background: repeating-conic-gradient(#fff 0 25%, #d4d0c8 0 50%) 0 0 / 2px 2px; box-shadow: inset 1px 1px 0 #fff, inset -1px -1px 0 #999; }
.icon-m { font: bold 21px/21px "Liberation Sans", sans-serif; letter-spacing: 0; color: #000; }
.icon-u { flex-direction: column; font: 7px/7px "DejaVu Sans Mono", monospace; letter-spacing: 0; color: #333; }
.sep { width: 7px; height: 20px; flex: none; background: linear-gradient(#808080, #808080) center / 1px 100% no-repeat; }
.sep8 { width: 8px; }
.grip { width: 15px; flex: none; height: 27px; position: relative; border-left: 1px solid #888; margin-left: 1px; box-shadow: inset 1px 0 0 #fff; }
.grip::after { content: ""; position: absolute; left: 4px; top: 2px; width: 3px; height: 23px; border: 1px solid; border-color: #fff #808080 #808080 #fff; }
.toolbar > .grip { width: 15.500px; }

/* workspace */
.workspace { height: 615px; flex: none; display: flex; }
.tools { width: 30px; flex: none; display: flex; flex-direction: column; }
.tools-grip { height: 6px; flex: none; margin: 0 4px 0 2px; border-top: 1px solid #888; box-shadow: inset 0 1px 0 #fff; }
.t { width: 25px; height: 22px; flex: none; display: flex; align-items: center; justify-content: center; margin-left: 1px; }
.t svg { width: 22px; height: 22px; }
.t-on { background: repeating-conic-gradient(#fff 0 25%, #d4d0c8 0 50%) 0 0 / 2px 2px; box-shadow: inset -1px -1px 0 #fff, inset 1px 1px 0 #888; }
.t-a { font: bold 22px/22px "Liberation Serif", serif; letter-spacing: 0; color: #222; }
.tools-sep { height: 4px; flex: none; margin: 1px 4px 0 2px; border-top: 1px solid #888; box-shadow: inset 0 1px 0 #fff; }

.side { width: 121px; flex: none; display: flex; flex-direction: column; gap: 5px; }
.overview { height: 100px; flex: none; background: #000; padding: 10px 6px; }
.ov-board { height: 80px; border: 1px solid #101078; display: flex; align-items: center; justify-content: center; padding-right: 12px; }
.ov-green { width: 41px; height: 24px; border: 1px solid #22a022; display: flex; align-items: center; justify-content: center; }
.ov-pcb { display: block; }
.listbox { flex: 1; min-height: 0; background: #fff; border: 1px solid #000; display: flex; flex-direction: column; overflow: hidden; margin-bottom: 2px; }
.list-head { height: 16px; flex: none; display: flex; background: #808080; }
.list-t { width: 16px; height: 16px; flex: none; background: #d4d0c8; border: 1px solid; border-color: #fff #404040 #404040 #fff; text-align: center; line-height: 14px; }
.list-title { margin-left: 13px; color: #c8c8c8; white-space: nowrap; line-height: 16px; }
.list { list-style: none; margin: 0; padding: 0; font-size: 12px; letter-spacing: -.200px; line-height: 13px; }
.list li { height: 13.050px; padding-left: 3px; }
.list .sel { background: #0a246a; color: #fff; height: 14px; line-height: 15px; }

/* canvas */
.canvas { width: 865px; flex: none; margin: 0 4px 2px 4px; position: relative; background-color: #050505;
  background-image:
    linear-gradient(90deg, #525252 2px, transparent 2px),
    linear-gradient(#525252 2px, transparent 2px),
    repeating-linear-gradient(90deg, #484848 0 1px, transparent 1px 19.100px),
    repeating-linear-gradient(180deg, #484848 0 1px, transparent 1px 19.100px);
  background-size: 191px 191px;
  background-position: 172px 183px;
}
.canvas-art { position: absolute; left: 0; top: 0; display: block; }
.dim-text { font: 13px "DejaVu Sans Mono", monospace; fill: #3fd8d0; letter-spacing: 1.500px; }

/* bottom bar */
.bottombar { height: 29px; flex: none; display: flex; align-items: center; padding: 0 0 1px 8px; border-top: 1px solid #fff; }
.angle { width: 26px; height: 16px; flex: none; margin-left: 3px; padding: 0; border: 1px solid; border-color: #808080 #fff #fff #808080; font: 12px Roboto, sans-serif; background: #fff; }
.grip-b1 { width: 18px; height: 27px; }
.grip-b1, .grip-b2, .grip-b3 { margin-left: 0; }
.layer-combo { width: 133px; height: 20px; flex: none; display: flex; align-items: center; background: #fff; border: 1px solid; border-color: #808080 #fff #fff #808080; box-shadow: inset 1px 1px 0 #404040; padding-left: 3px; }
.swatch { width: 17px; height: 14px; background: #c00000; border: 1px solid #000; flex: none; }
.layer-text { margin-left: 4px; white-space: nowrap; }
.drop { width: 17px; height: 100%; flex: none; margin-left: auto; background: #d4d0c8; border: 1px solid; border-color: #fff #404040 #404040 #fff; display: flex; align-items: center; justify-content: center; }
.drop::after { content: ""; border: 4px solid transparent; border-top: 4px solid #000; border-bottom: 0; }
.grip-b2 { width: 16.500px; }
.sep-b { width: 8.500px; }
.grip-b3 { width: 17px; }
.msg { flex: 1; height: 16px; margin-right: 4px; line-height: 15px; padding-left: 2px; border: 1px solid; border-color: #808080 #fff #fff #808080; white-space: nowrap; }

/* status bar */
.statusbar { height: 21px; flex: none; display: flex; align-items: center; padding-left: 3px; border-top: 1px solid #888; box-shadow: inset 0 1px 0 #fff; }
.st-grip { width: 2px; height: 16px; flex: none; border-left: 1px solid #808080; border-right: 1px solid #fff; }
.st-check { width: 19px; height: 16px; flex: none; margin-left: 3px; }
.st-box { height: 16px; flex: none; border: 1px solid; border-color: #808080 #fff #fff #808080; line-height: 14px; padding-left: 2px; white-space: nowrap; }
.st-drc { width: 79px; margin-left: 1px; }
.st-line { width: 2px; height: 20px; flex: none; margin-left: 4px; border-left: 1px solid #808080; border-right: 1px solid #fff; }
.st-grip2 { width: 3px; height: 16px; flex: none; margin-left: 3px; border: 1px solid; border-color: #fff #808080 #808080 #fff; }
.st-wide { flex: 1; margin: 0 4px 0 2px; }

/* taskbar */
.taskbar { height: 30px; flex: none; display: flex; align-items: center; border-top: 1px solid #fff; box-shadow: inset 0 1px 0 #eee; padding: 2px 2px 1px; font: 17px "Liberation Sans", sans-serif; letter-spacing: 0; }
.start { width: 63px; height: 25px; flex: none; display: flex; align-items: center; padding-left: 2px; font: bold 18px "Liberation Sans", sans-serif; background: #d4d0c8; border: 1px solid; border-color: #fff #404040 #404040 #fff; box-shadow: inset -1px -1px 0 #808080; }
.flag { width: 16px; height: 17px; flex: none; }
.tb-sep { width: 3px; height: 22px; flex: none; margin: 0 4px 0 8px; border: 1px solid; border-color: #fff #808080 #808080 #fff; }
.quick { width: 25px; height: 20px; flex: none; display: flex; align-items: center; justify-content: center; }
.quick svg { width: 18px; height: 18px; }
.quick-isis { background: #1c2cc8; height: 15px; margin: 0 2px; width: 19px; font: bold 8px/15px "Liberation Sans", sans-serif; color: #fff; }
.tb-sep2 { margin: 0 3px 0 15px; }
.task { width: 160px; height: 25px; flex: none; display: flex; align-items: center; gap: 4px; padding-left: 4px; margin-right: 3px; font: 16.500px "Liberation Sans", sans-serif; background: #d4d0c8; border: 1px solid; border-color: #fff #404040 #404040 #fff; box-shadow: inset -1px -1px 0 #808080; white-space: nowrap; }
.task-ico { width: 18px; height: 16px; flex: none; }
.task-on { background: repeating-conic-gradient(#fff 0 25%, #d4d0c8 0 50%) 0 0 / 2px 2px; border-color: #404040 #fff #fff #404040; box-shadow: inset 1px 1px 0 #808080; letter-spacing: .600px; }
.logo-task { letter-spacing: -.300px; }
.tray { margin-left: auto; width: 149px; height: 25px; flex: none; display: flex; align-items: center; border: 1px solid; border-color: #808080 #fff #fff #808080; padding-left: 6px; }
.tray-more { font: bold 12px "Liberation Sans", sans-serif; width: 12px; }
.tray-ico { width: 18px; height: 18px; flex: none; margin-left: 1px; }
.tray-ico2 { margin-left: 2px; }
.clock { margin-left: 14px; color: #222; white-space: nowrap; }

/* dialog */
.dialog { position: absolute; left: 118px; top: 163px; width: 778px; height: 402px; background: #d4d0c8; border: 1px solid; border-color: #d4d0c8 #404040 #404040 #d4d0c8; box-shadow: inset 1px 1px 0 #fff, inset -1px -1px 0 #808080; padding: 2px; }
.dlg-title { height: 21px; display: flex; align-items: center; justify-content: space-between; padding: 1px 2px 0 1px; background: linear-gradient(90deg, #0a246a, #a6caf0); color: #fff; font: 18.500px "Liberation Sans", sans-serif; letter-spacing: 0; }
.dlg-btns { display: flex; gap: 2px; }
.dlg-btn { font: bold 15px "Liberation Sans", sans-serif; color: #000; }
.dlg-body { display: flex; padding: 21px 0 0 10px; }
.dlg-left { width: 522px; flex: none; display: flex; flex-direction: column; }
.dlg-right { width: 222px; flex: none; margin: -1px 0 0 9px; }

.group { border: 1px solid #888; box-shadow: inset 1px 1px 0 #fff, 1px 1px 0 #fff; flex: none; }
.g-title { width: fit-content; margin: -6px auto 0; height: 14px; line-height: 14px; padding: 0 1px; background: #d4d0c8; white-space: nowrap; }
.row-top { display: flex; gap: 4px; height: 63px; }
.g-printer { width: 327px; }
.g-options { width: 190px; }
.printer-in { display: flex; justify-content: space-between; padding: 5px 11px 0 11px; }
.printer-name { color: #000080; line-height: 19px; white-space: nowrap; }
.printer-btns { display: flex; flex-direction: column; gap: 5px; }
.btn { background: #d4d0c8; border: 1px solid #000; box-shadow: inset 1px 1px 0 #fff, inset -2px -2px 0 #808080; white-space: nowrap; cursor: default; }
.btn-printer { width: 68px; height: 20px; line-height: 16px; }
.btn-off { color: #808080; text-shadow: 1px 1px 0 #fff; height: 21px; }
.opt-row { display: flex; align-items: center; padding-left: 10px; margin-top: 4px; }
.lbl { white-space: nowrap; }
.opt-row .lbl { width: 51px; flex: none; }
.combo { display: flex; align-items: center; height: 21px; padding-left: 2px; background: #fff; border: 1px solid; border-color: #404040 #e8e8e8 #e8e8e8 #404040; box-shadow: inset 1px 1px 0 #808080; white-space: nowrap; }
.combo-col { width: 117px; margin-left: 3px; flex: none; }
.chk-row { display: flex; align-items: center; height: 16.200px; white-space: nowrap; }
.opt-chk { margin: 10px 0 0 8px; }
.opt-chk .cb { margin-right: 2px; }
.cb { width: 12px; height: 12px; flex: none; margin-right: 4px; background: #fff; border: 1px solid; border-color: #a8a8a8 #eee #eee #a8a8a8; display: flex; align-items: center; justify-content: center; }
.cb-off { background: #d4d0c8; }
.dis { color: #808080; text-shadow: 1px 1px 0 #fff; }
.focus { outline: 1px dotted #000; padding: 0 2px 0 1px; margin-left: -1px; }
.blackbar { width: 520px; height: 6px; margin: 8px 0 0 2px; background: #000; flex: none; }
.row-mode { height: 45px; flex: none; display: flex; align-items: center; padding: 0 0 6px 2px; }
.lbl-mode { width: 70px; }
.combo-mode { width: 179px; height: 20px; flex: none; }
.cb-sep { margin-left: 38px; }
.lbl-sep { width: 105px; }
.lbl-copies { width: 51px; }
.spin { width: 58px; height: 20px; flex: none; background: #d4d0c8; border: 1px solid; border-color: #555 #eee #eee #555; display: flex; justify-content: flex-end; padding: 1px; }
.spin-btns { width: 17px; display: flex; flex-direction: column; gap: 1px; }
.spin-btns span { flex: 1; background: #d4d0c8; border: 1px solid; border-color: #fff #555 #555 #fff; font-size: 8px; line-height: 6px; text-align: center; overflow: hidden; }
.row-main { display: flex; gap: 5px; height: 192px; flex: none; }
.g-layers { width: 254px; height: 192px; }
.layers-in { display: flex; padding: 5px 0 0 9px; }
.col-1 { width: 101px; }
.col-2 { width: 70px; }
.layers-cols { display: flex; }
.all-none { display: flex; gap: 8px; margin: 6px 0 0 -9px; }
.btn-sm { width: 68px; height: 21px; }
.main-right { width: 263px; flex: none; display: flex; flex-direction: column; }
.mr-top { display: flex; gap: 6px; height: 137px; }
.g-scale { width: 66px; height: 137px; }
.rad-list { padding: 6px 0 0 6px; }
.rad-row { display: flex; align-items: center; height: 19.500px; white-space: nowrap; }
.radio { width: 10px; height: 10px; flex: none; margin: 0 6px 0 2px; transform: rotate(45deg); background: #fff; border: 1px solid; border-color: #808080 #fff #fff #808080; position: relative; }
.radio.on::after { content: ""; position: absolute; inset: 1.500px; background: #000; }
.mr-stack { width: 191px; flex: none; display: flex; flex-direction: column; gap: 13px; }
.mr-rr { display: flex; gap: 7px; }
.g-rot { width: 106px; height: 59px; }
.g-ref { width: 78px; height: 59px; }
.rad-rot { padding-left: 8px; }
.rad-rot .rad-row, .rad-ref .rad-row { height: 20px; }
.rad-rot .radio { margin-right: 4px; }
.rad-ref { padding-left: 7px; }
.rad-ref .radio { margin-right: 5px; }
.g-comp { width: 189px; height: 66px; margin-left: 1px; }
.comp-note { line-height: 14px; padding: 1px 0 0 11px; white-space: nowrap; }
.comp-row { display: flex; align-items: center; padding: 5px 0 0 11px; }
.lbl-x { width: 11px; flex: none; }
.field { width: 56px; height: 19px; flex: none; margin-left: 9px; padding: 0 0 0 2px; font: 12px Roboto, sans-serif; background: #fff; border: 1px solid; border-color: #404040 #eee #eee #404040; box-shadow: inset 1px 1px 0 #808080; }
.lbl-y { width: 10px; flex: none; margin-left: 10px; }
.field-y { width: 55px; margin-left: 12px; }
.g-file { width: 259px; height: 41px; margin: 14px 0 0 3px; }
.file-row { display: flex; align-items: center; padding: 7px 0 0 6px; }
.file-name { white-space: nowrap; }
.btn-file { margin-left: auto; margin-right: 5px; }
.btn-adv { width: 117px; height: 24px; margin-top: 5px; flex: none; display: flex; align-items: center; padding-left: 5px; }
.adv-sep { width: 2px; height: 14px; margin-left: 5px; flex: none; border-left: 1px solid #808080; border-right: 1px solid #fff; }
.adv-arrow { margin-left: 3px; flex: none; border: 5px solid transparent; border-top: 5px solid #444; border-bottom: 0; }

.preview { height: 316px; background: #808080; padding: 5px 2px 4px 4px; box-shadow: inset -1px -1px 0 #d4d0c8; }
.paper { height: 100%; background: #fff; border: 1px solid #000; border-width: 1px 2px 2px 1px; }
.paper-box { width: 97px; height: 42px; border: solid #000; border-width: 0 1px 1px 0; padding: 11px 0 0 13px; }
.pcb { display: block; }
.ok-row { display: flex; justify-content: flex-end; gap: 6px; margin-top: 4px; padding-right: 1px; }
.btn-main { width: 78px; height: 24px; }
.btn-ok { width: 79px; border-width: 2px; }

/* annotations laid over the window */
.banner { position: absolute; left: 332px; top: 132px; width: 311px; height: 57px; background: #fff; color: #e01010; font: bold 24px/24px "Liberation Sans", sans-serif; letter-spacing: .400px; padding-top: 9px; white-space: pre; }
.scribble { position: absolute; left: 360px; top: 200px; display: block; }
```
